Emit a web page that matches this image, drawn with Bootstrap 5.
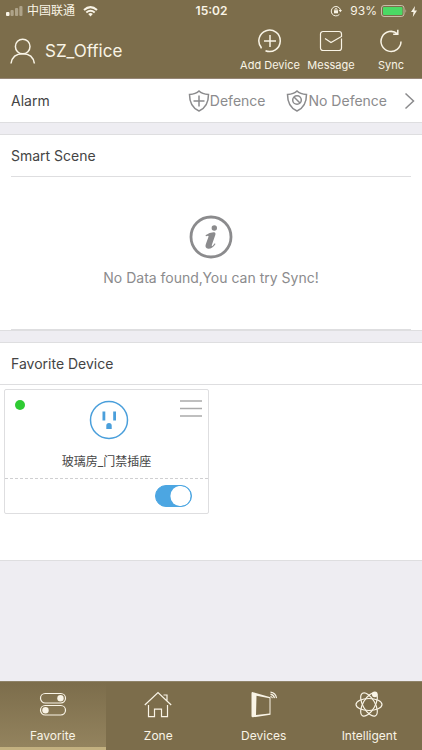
<!DOCTYPE html>
<html lang="en">
<head>
<meta charset="utf-8">
<meta name="viewport" content="width=device-width, initial-scale=1">
<title>SZ_Office</title>
<link href="https://cdn.jsdelivr.net/npm/bootstrap@5.3.0/dist/css/bootstrap.min.css" rel="stylesheet">
<style>
:root { --olive: #7c6d4b; --cream: #f9f4e6; --grey: #8b8b8d; --line: #dedee0; }
body { font-family: Inter, "Noto Sans CJK SC", sans-serif; font-size: 14px; line-height: 20px; color: #444; background: #eeedf2; }
svg { display: block; flex: none; fill: none; stroke: currentColor; stroke-width: 1.5; }
.fine { stroke-width: 1; }
.thin { stroke-width: 1.2; }
.thick { stroke-width: 2.8; }
.solid { fill: currentColor; stroke: none; }
.app-head { background: var(--olive); color: var(--cream); border-bottom: 1px solid #958575; }
.status { height: 22px; font-size: 12px; padding: 0 5px 0 6px; }
.status > div { flex: 1 1 0; }
.clock { font-weight: 600; font-size: 12px; }
.titlebar { height: 56px; padding: 2px 1px 0 9px; }
.site { font-size: 17px; line-height: 24px; }
.action { font-size: 11px; line-height: 16px; color: inherit; }
.wide { width: 62px; }
.slim { width: 60px; }
.panel { background: #fff; border-bottom: 1px solid var(--line); }
.panel + .panel { border-top: 1px solid var(--line); margin-top: 11px; }
.alarm { height: 44px; padding: 0 7px 0 11px; }
.grey { color: var(--grey); }
.defences { gap: 21px; }
.defence { font-size: 14px; line-height: 20px; }
.chevron { margin-left: -4px; }
.inset { margin: 0 11px; border-bottom: 1px solid var(--line); }
.heading { font-size: 14px; line-height: 41px; font-weight: 400; }
.empty { height: 153px; padding-top: 38px; gap: 9px; }
.fav { height: 219px; }
.fav-heading { padding: 0 11px; border-bottom: 1px solid var(--line); }
.device { width: 205px; margin: 4px; border: 1px solid var(--line); border-radius: 2px; }
.device-top { height: 62px; padding: 10px 6px 0 10px; }
.side { flex: 1 1 0; }
.dot { width: 10px; height: 10px; border-radius: 50%; background: #2fcb33; }
.device-name { font-size: 12px; }
.device-body { border-bottom: 1px dashed #cfcfd1; padding-bottom: 6px; }
.device-foot { height: 34px; padding-right: 16px; }
.form-switch .form-check-input.toggle { width: 37px; height: 22px; margin: 0; border-color: #4ca6e2; }
.form-switch .form-check-input.toggle:checked { background-color: #4ca6e2; background-size: 27px; background-position: right -3px center; }
.tabs { background: var(--olive); border-top: 1px solid #8f8368; }
.tab { color: var(--cream); font-size: 12px; line-height: 16px; height: 68px; padding-top: 9px; gap: 9px; border-bottom: 3px solid transparent; }
.tab.active { background: linear-gradient(#7c6d4b, #93835e); border-bottom-color: #c3b180; }
</style>
<script defer src="https://cdn.jsdelivr.net/npm/bootstrap@5.3.0/dist/js/bootstrap.bundle.min.js"></script>
</head>
<body class="d-flex flex-column min-vh-100">
<header class="app-head">
  <div class="status d-flex align-items-center">
    <div class="d-flex align-items-center gap-1">
      <svg class="solid" width="17" height="12" viewBox="0 0 17 12"><rect y="7" width="3.5" height="4" rx="1"/><g opacity=".4"><rect x="4.5" y="5" width="3.2" height="6" rx="1"/><rect x="9" y="3" width="3.2" height="8" rx="1"/><rect x="13.3" y="1" width="3.2" height="10" rx="1"/></g></svg>
      <span>中国联通</span>
      <svg class="ms-1" width="15" height="11" viewBox="0 0 15 11"><path stroke-width="2" d="M1 4Q7.500-1.700 14 4M3.300 6.500Q7.500 3 11.700 6.500"/><path class="solid" d="M5.200 8Q7.500 6.200 9.800 8L7.500 10.600Z"/></svg>
    </div>
    <span class="clock">15:02</span>
    <div class="d-flex align-items-center justify-content-end">
      <svg width="12" height="12" viewBox="0 0 12 12"><g class="fine"><path d="M9.400 9.400A4.700 4.700 0 1 1 10.500 5"/><path d="M5 5.500V4.500a1 1 0 0 1 2 0v1"/></g><path d="M8.600 5h3.400l-1.600 2.200z" class="solid"/><rect class="solid" x="4" y="5.300" width="4" height="3"/></svg>
      <span class="ms-2">93%</span>
      <svg class="ms-1" width="26" height="12" viewBox="0 0 26 12"><rect class="fine" x=".5" y=".5" width="22.500" height="11" rx="2.500" opacity=".6"/><rect x="2" y="2" width="19.500" height="8" rx="1" fill="#4bd964" stroke="none"/><path d="M24.500 4q1.500 2 0 4z" class="solid" opacity=".6"/></svg>
      <svg class="solid ms-1" width="6" height="11" viewBox="0 0 6 11"><path d="M4 0 0 6h2.500L1.800 11 6 4.600H3.400z"/></svg>
    </div>
  </div>
  <div class="titlebar d-flex align-items-center justify-content-between">
    <div class="d-flex align-items-center gap-2">
      <svg width="28" height="26" viewBox="0 0 28 26"><circle cx="13.700" cy="8.500" r="7.300"/><path d="M2 25.500C3 19 7.500 15.800 13.700 15.800S24.400 19 25.400 25.500"/></svg>
      <span class="site">SZ_Office</span>
    </div>
    <div class="d-flex">
      <button type="button" class="action btn p-0 border-0 wide d-flex flex-column align-items-center gap-1"><svg width="24" height="24" viewBox="0 0 24 24"><path d="M3.300 18.600A10.700 10.700 0 1 1 7.500 21.700M3.500 19.300 1.800 16M12 6v12M6 12h12"/></svg><span class="text-nowrap">Add Device</span></button>
      <button type="button" class="action btn p-0 border-0 slim d-flex flex-column align-items-center gap-1"><svg width="24" height="24" viewBox="0 0 24 24"><path class="thin" d="M22.500 9.500V19a2.500 2.500 0 0 1-2.500 2.500H4A2.500 2.500 0 0 1 1.500 19V5A2.500 2.500 0 0 1 4 2.500H20A2.500 2.500 0 0 1 22.500 5V7.500L12 13.500 6 9.500"/></svg><span>Message</span></button>
      <button type="button" class="action btn p-0 border-0 slim d-flex flex-column align-items-center gap-1"><svg width="24" height="24" viewBox="0 0 24 24"><path d="M22 12.500A10 10 0 1 1 18.500 4.800M18.800 .8v4.400h-4.600"/></svg><span>Sync</span></button>
    </div>
  </div>
</header>
<main class="flex-grow-1">
  <section class="panel alarm d-flex align-items-center justify-content-between">
    <span>Alarm</span>
    <div class="defences grey d-flex align-items-center">
      <button type="button" class="defence btn p-0 border-0 grey d-flex align-items-center"><svg width="22" height="22" viewBox="0 0 22 22"><path d="M11 1Q14 4 20.500 4.500C20.500 13 18 18 11 21 4 18 1.500 13 1.500 4.500Q8 4 11 1ZM11 5.500v11M5.500 11h11"/></svg><span>Defence</span></button>
      <button type="button" class="defence btn p-0 border-0 grey d-flex align-items-center"><svg width="22" height="22" viewBox="0 0 22 22"><path d="M11 1Q14 4 20.500 4.500C20.500 13 18 18 11 21 4 18 1.500 13 1.500 4.500Q8 4 11 1Z"/><circle cx="11" cy="10" r="4.300"/><path d="m8 7 6 6"/></svg><span>No Defence</span></button>
      <svg class="chevron" width="11" height="18" viewBox="0 0 11 18"><path d="m1.500 1.500 8 7.500-8 7.500"/></svg>
    </div>
  </section>
  <section class="panel">
    <h2 class="heading inset">Smart Scene</h2>
    <div class="inset empty grey d-flex flex-column align-items-center">
      <svg width="44" height="44" viewBox="0 0 44 44"><circle class="thick" cx="22" cy="22" r="20"/><g class="solid"><circle cx="25.300" cy="13" r="2.700"/><path d="M16.500 20.200Q21 17 25 17.200 27 17.500 26.300 20L23 29.500Q22.300 32 23.500 31 24.500 30 25.800 28.300L26.500 28.900Q23.500 33.800 19.300 33.700 15.500 33.300 16.800 29.300L19.500 21.800Q20 19.800 17 21.300Z"/></g></svg>
      <span>No Data found,You can try Sync!</span>
    </div>
  </section>
  <section class="panel fav">
    <h2 class="heading fav-heading m-0">Favorite Device</h2>
    <article class="device">
      <div class="device-body">
        <div class="device-top d-flex">
          <div class="side"><div class="dot"></div></div>
          <svg width="40" height="40" viewBox="0 0 40 40" color="#4a9fdb"><circle cx="20" cy="20" r="18.500"/><path class="solid" d="M13.500 11.500h2.800v9h-2.800zM24.200 11.500H27v9h-2.800zM17.300 29v-3.500q0-2.500 2.700-2.500t2.700 2.500V29z"/></svg>
          <div class="side d-flex justify-content-end align-items-start">
            <button type="button" class="btn p-0 border-0" aria-label="Menu"><svg width="22" height="17" viewBox="0 0 22 17" color="#aaa"><path d="M0 1h22M0 8.500h22M0 16h22"/></svg></button>
          </div>
        </div>
        <label for="socket" class="device-name d-block text-center">玻璃房_门禁插座</label>
      </div>
      <div class="device-foot form-check form-switch d-flex align-items-center justify-content-end m-0">
        <input class="form-check-input toggle" type="checkbox" role="switch" id="socket" checked>
      </div>
    </article>
  </section>
</main>
<nav class="tabs row g-0 text-center">
  <a href="#" class="tab active col text-decoration-none d-flex flex-column align-items-center"><svg width="28" height="28" viewBox="0 0 28 28"><g class="thin"><rect x="1.500" y="2.500" width="25" height="9.500" rx="4.700"/><rect x="1.500" y="14.500" width="25" height="9.500" rx="4.700"/></g><g class="solid"><circle cx="21.500" cy="7.300" r="3.200"/><circle cx="6.500" cy="19.300" r="3.200"/></g></svg><span>Favorite</span></a>
  <a href="#" class="tab col text-decoration-none d-flex flex-column align-items-center"><svg width="28" height="28" viewBox="0 0 28 28"><path class="thin" d="M.8 14 14 1.500 27.200 14M19.500 4H23v5.500M4.500 14v11.700h6v-7.500h7v7.500h6V14"/></svg><span>Zone</span></a>
  <a href="#" class="tab col text-decoration-none d-flex flex-column align-items-center"><svg width="28" height="28" viewBox="0 0 28 28"><path class="solid" fill-rule="evenodd" d="M3 1.200 20.500 6.300V23.800L3 26.300Q1.500 26.500 1.500 25V2.500Q1.500 .8 3 1.200ZM6.500 4.800 6 24 19.500 22.500V7.300Z"/><path class="thin" d="M20.500 5.200A3 3 0 0 1 22.500 7.200M20.500 3.200A5 5 0 0 1 24.500 7.200M20.500 1.200A7 7 0 0 1 26.500 7.200"/></svg><span>Devices</span></a>
  <a href="#" class="tab col text-decoration-none d-flex flex-column align-items-center"><svg width="28" height="28" viewBox="0 0 28 28"><g class="thin"><ellipse cx="14" cy="13.500" rx="13" ry="6"/><ellipse cx="14" cy="13.500" rx="13" ry="6" transform="rotate(60 14 13.500)"/><ellipse cx="14" cy="13.500" rx="13" ry="6" transform="rotate(120 14 13.500)"/></g><circle class="solid" cx="19.800" cy="3.300" r="2.900"/></svg><span>Intelligent</span></a>
</nav>
</body>
</html>
